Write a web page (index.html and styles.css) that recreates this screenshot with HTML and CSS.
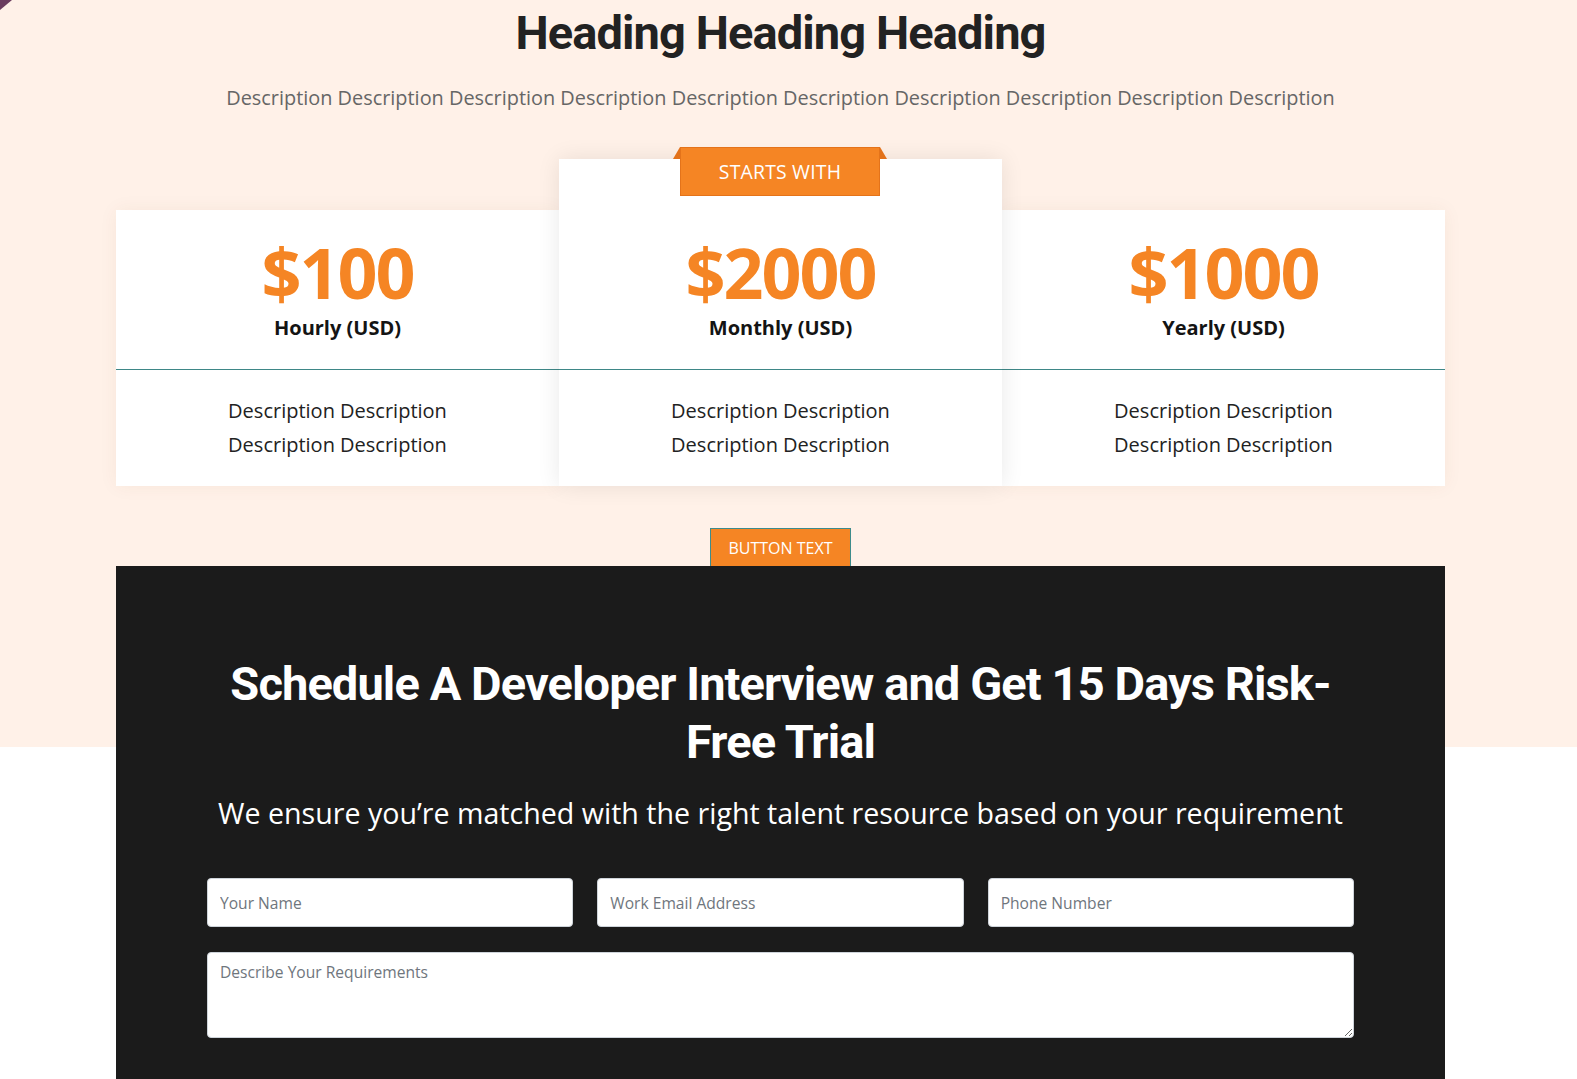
FILE: index.html
```html
<!DOCTYPE html>
<html lang="en">
<head>
<meta charset="utf-8">
<title>Pricing</title>
<link rel="stylesheet" href="styles.css">
</head>
<body>
<div class="page">
  <span class="corner"></span>
  <div class="wrap">
    <header class="intro">
      <h1 class="intro-title">Heading Heading Heading</h1>
      <p class="intro-text">Description Description Description Description Description Description Description Description Description Description</p>
    </header>

    <div class="plans">
      <div class="plan">
        <div class="plan-head">
          <div class="plan-price">$100</div>
          <div class="plan-period">Hourly (USD)</div>
        </div>
        <div class="plan-body">Description Description<br>Description Description</div>
      </div>
      <div class="plan plan-featured">
        <div class="ribbon">STARTS WITH</div>
        <div class="plan-head">
          <div class="plan-price">$2000</div>
          <div class="plan-period">Monthly (USD)</div>
        </div>
        <div class="plan-body">Description Description<br>Description Description</div>
      </div>
      <div class="plan">
        <div class="plan-head">
          <div class="plan-price">$1000</div>
          <div class="plan-period">Yearly (USD)</div>
        </div>
        <div class="plan-body">Description Description<br>Description Description</div>
      </div>
    </div>

    <div class="cta-row">
      <button class="cta-btn" type="button">BUTTON TEXT</button>
    </div>

    <section class="contact">
      <h2 class="contact-title">Schedule A Developer Interview and Get 15 Days Risk-Free Trial</h2>
      <p class="contact-sub">We ensure you’re matched with the right talent resource based on your requirement</p>
      <form class="contact-form">
        <div class="field-row">
          <input class="field" type="text" placeholder="Your Name">
          <input class="field" type="email" placeholder="Work Email Address">
          <input class="field" type="tel" placeholder="Phone Number">
        </div>
        <textarea class="field field-area" placeholder="Describe Your Requirements"></textarea>
      </form>
    </section>
  </div>
</div>
</body>
</html>
```

FILE: styles.css
```css
* { box-sizing: border-box; }

html, body {
  margin: 0;
  padding: 0;
}

body {
  font-family: "Open Sans", "Noto Sans", sans-serif;
  color: #222;
  background: #fff;
}

.page {
  position: relative;
  min-height: 1079px;
  padding-right: 16px;
  background: linear-gradient(#fff1e8 0, #fff1e8 747px, #ffffff 747px);
  overflow: hidden;
}

.corner {
  position: absolute;
  left: 0;
  top: 0;
  width: 12px;
  height: 10px;
  background: #6b3c5f;
  clip-path: polygon(0 0, 100% 0, 0 100%);
}

.wrap {
  width: 1329px;
  margin: 0 auto;
}

/* intro */
.intro {
  text-align: center;
  padding-top: 5px;
}

.intro-title {
  margin: 0;
  font-family: Roboto, "Open Sans", sans-serif;
  font-weight: 700;
  font-size: 47px;
  line-height: 56px;
  letter-spacing: -0.9px;
  color: #222;
}

.intro-text {
  margin: 22px 0 0;
  font-size: 19.9px;
  line-height: 30px;
  color: #666;
}

/* plans */
.plans {
  margin-top: 46px;
  display: grid;
  grid-template-columns: repeat(3, 1fr);
  align-items: end;
}

.plan {
  position: relative;
  background: #fff;
  text-align: center;
  box-shadow: 0 0 18px rgba(120, 70, 30, 0.06);
}

.plan-featured {
  z-index: 1;
  padding-top: 51px;
  box-shadow: 0 0 22px rgba(0, 0, 0, 0.09);
}

.plan-head {
  padding: 27px 0 29px;
  border-bottom: 1px solid #3e8787;
}

.plan-price {
  font-size: 70px;
  line-height: 70px;
  font-weight: 700;
  letter-spacing: -2px;
  color: #f58524;
}

.plan-period {
  margin-top: 9px;
  font-size: 20px;
  line-height: 24px;
  font-weight: 700;
  color: #141414;
}

.plan-body {
  padding: 24px 0 24px;
  font-size: 20px;
  line-height: 34px;
  color: #222;
}

.ribbon {
  position: absolute;
  left: 121px;
  top: -12px;
  width: 200px;
  height: 49px;
  display: flex;
  align-items: center;
  justify-content: center;
  background: #f58524;
  border: 1px solid #e4731a;
  color: #fff;
  font-size: 19.4px;
  letter-spacing: 0.2px;
}

.ribbon::before,
.ribbon::after {
  content: "";
  position: absolute;
  top: -1px;
  width: 0;
  height: 0;
  border-bottom: 12px solid #e2711a;
}

.ribbon::before {
  left: -8px;
  border-left: 7px solid transparent;
}

.ribbon::after {
  right: -8px;
  border-right: 7px solid transparent;
}

/* cta */
.cta-row {
  display: flex;
  justify-content: center;
  margin-top: 42px;
}

.cta-btn {
  height: 38px;
  padding: 0 17px;
  background: #f58524;
  border: 1px solid #3e8c8c;
  border-bottom: 0;
  color: #fff;
  font-family: "Open Sans", sans-serif;
  font-size: 16px;
  line-height: 36px;
}

/* contact */
.contact {
  background: #1b1b1b;
  padding: 89px 91px 60px;
  min-height: 520px;
  text-align: center;
}

.contact-title {
  margin: 0;
  font-family: Roboto, "Open Sans", sans-serif;
  font-weight: 700;
  font-size: 47px;
  line-height: 58px;
  letter-spacing: -0.9px;
  color: #fff;
}

.contact-sub {
  margin: 24px 0 0;
  font-size: 28.6px;
  line-height: 36px;
  color: #fff;
}

.contact-form {
  margin-top: 47px;
  text-align: left;
}

.field-row {
  display: grid;
  grid-template-columns: repeat(3, 1fr);
  gap: 24px;
}

.field {
  display: block;
  width: 100%;
  height: 49px;
  padding: 0 12px;
  border: 1px solid #ced4da;
  border-radius: 4px;
  background: #fff;
  font-family: "Open Sans", sans-serif;
  font-size: 15.6px;
  color: #333;
}

.field::placeholder {
  color: #6f767d;
}

.field-area {
  margin-top: 25px;
  height: 86px;
  padding: 7px 12px;
  line-height: 24px;
}
```
